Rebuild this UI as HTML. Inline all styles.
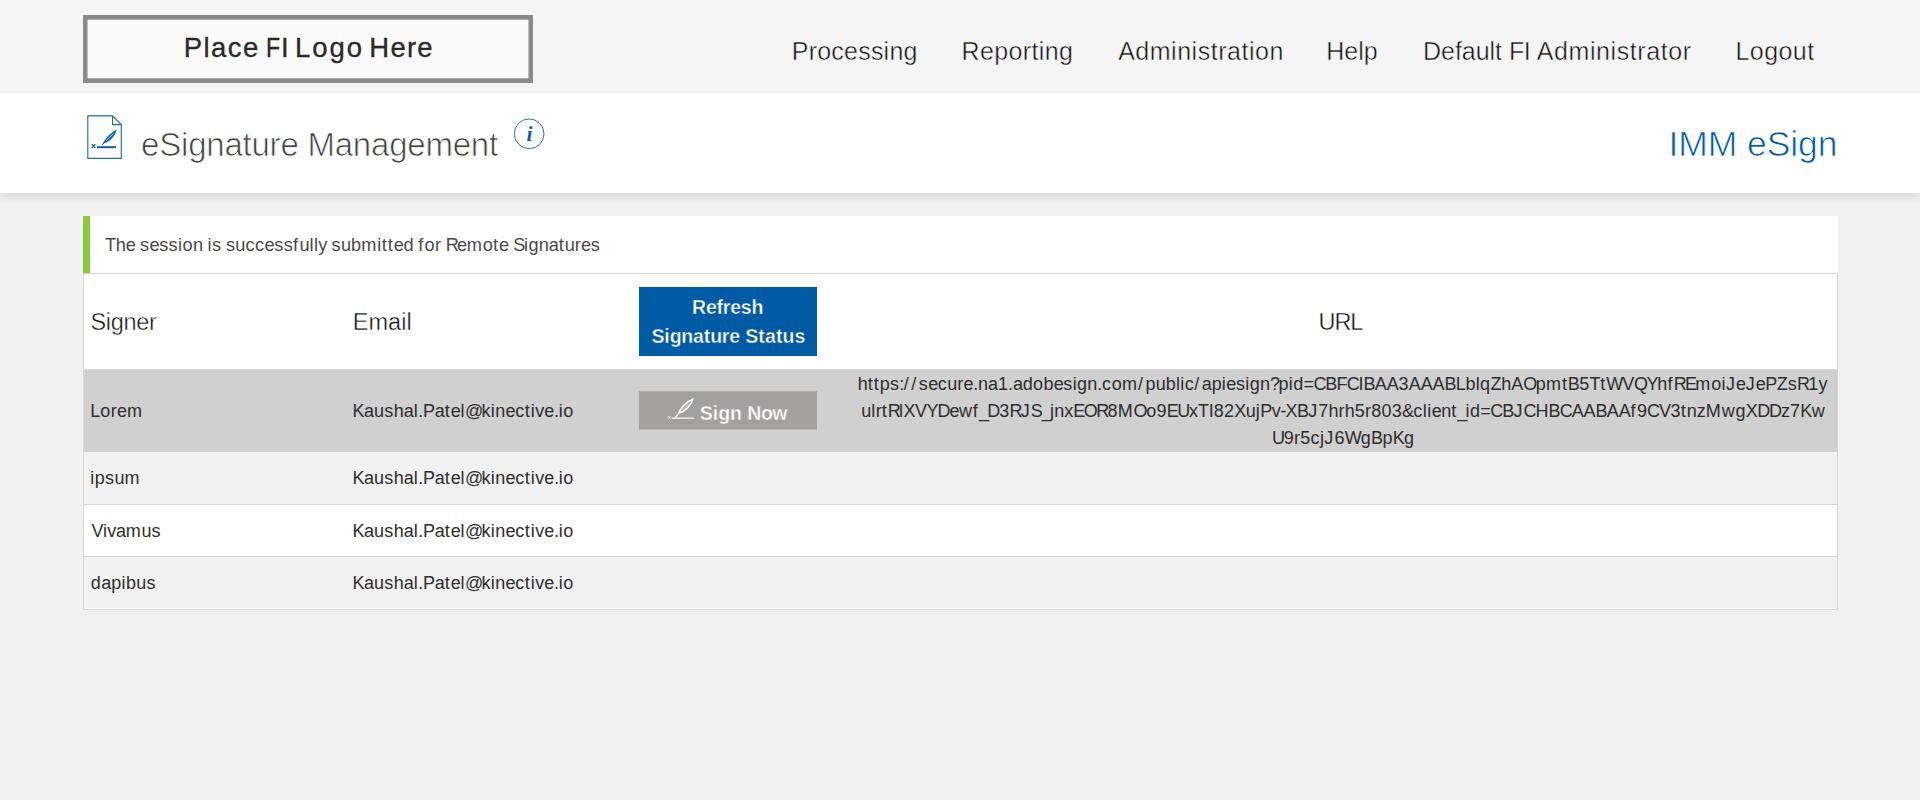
<!DOCTYPE html>
<html>
<head>
<meta charset="utf-8">
<title>eSignature Management</title>
<style>
html,body{margin:0;padding:0;}
body{width:1920px;height:800px;overflow:hidden;background:#f1f1f1;font-family:"Liberation Sans",sans-serif;position:relative;}
.abs{position:absolute;white-space:nowrap;line-height:1;}
#hdr{position:absolute;left:0;top:0;width:1920px;height:93px;background:linear-gradient(to bottom,#f5f5f5 0,#f5f5f5 89px,#f1f1f1 93px);z-index:1;}
#logo,#logotxt,.nav{z-index:2;}
#band{position:absolute;left:0;top:93px;width:1920px;height:100px;background:#fff;box-shadow:0 2px 10px rgba(0,0,0,0.14);}
.nav{color:#111;font-size:25px;top:39px;-webkit-text-stroke:0.45px #f5f5f5;}
#msg{position:absolute;left:83px;top:216px;width:1748px;height:57px;background:#fff;border-left:7px solid #8cc63f;}
#tbl{position:absolute;left:83px;top:273px;width:1753px;height:335px;border:1px solid #d6d6d6;background:#fff;}
.row{position:absolute;left:84px;width:1753px;}
.cell{color:#2e2e2e;font-size:18px;letter-spacing:0.1px;}
.th{color:#111;font-size:23.5px;-webkit-text-stroke:0.4px #fff;}
</style>
</head>
<body>
<div id="hdr"></div>
<svg id="logo" style="position:absolute;left:83px;top:15px;" width="450" height="68" viewBox="0 0 450 68"><rect x="0" y="0" width="450" height="68" fill="#8b8b8b"/><rect x="4.5" y="4.7" width="441" height="58.6" fill="#fafafa"/></svg>
<span class="abs" id="lt1" style="left:183.75px;letter-spacing:1.44px;top:34px;font-size:27.5px;color:#2a2828;-webkit-text-stroke:0.3px #2a2828;z-index:2;">Place</span>
<span class="abs" id="lt2" style="left:266.2px;transform-origin:0 0;transform:scaleX(0.84);top:34px;font-size:27.5px;color:#2a2828;-webkit-text-stroke:0.3px #2a2828;z-index:2;">F</span>
<span class="abs" id="lt2b" style="left:281.1px;top:34px;font-size:27.5px;color:#2a2828;-webkit-text-stroke:0.3px #2a2828;z-index:2;">I</span>
<span class="abs" id="lt3" style="left:294.9px;letter-spacing:1.97px;top:34px;font-size:27.5px;color:#2a2828;-webkit-text-stroke:0.3px #2a2828;z-index:2;">Logo</span>
<span class="abs" id="lt4" style="left:369.3px;letter-spacing:1.23px;top:34px;font-size:27.5px;color:#2a2828;-webkit-text-stroke:0.3px #2a2828;z-index:2;">Here</span>

<span class="abs nav" id="n1" style="left:791.75px;"><span style="letter-spacing:0.223px">Processing</span></span>
<span class="abs nav" id="n2" style="left:961.55px;"><span style="letter-spacing:0.362px">Reporting</span></span>
<span class="abs nav" id="n3" style="left:1118.15px;"><span style="letter-spacing:0.522px">Administration</span></span>
<span class="abs nav" id="n4" style="left:1326.35px;"><span style="letter-spacing:-0.029px">Help</span></span>
<span class="abs nav" id="n5" style="left:1423.05px;"><span style="letter-spacing:-0.032px">Default </span><span style="letter-spacing:-0.421px">FI </span><span style="letter-spacing:0.569px">Administrator</span></span>
<span class="abs nav" id="n6" style="left:1735.55px;"><span style="letter-spacing:0.423px">Logout</span></span>

<div id="band"></div>
<svg id="docicon" style="position:absolute;left:86px;top:114px;" width="38" height="46" viewBox="0 0 38 46">
  <path d="M1.8 1.8 H26.5 L35.3 10.6 V44.3 H1.8 Z" fill="#fff" stroke="#1b6fbb" stroke-width="1.15" stroke-linejoin="round"/>
  <path d="M26.5 1.8 V10.6 H35.3" fill="none" stroke="#1b6fbb" stroke-width="1.05"/>
  <path d="M11 33.2 H30.2" stroke="#0f5ea8" stroke-width="2" fill="none"/>
  <path d="M5.8 30.2 L9.4 34 M9.4 30.2 L5.8 34" stroke="#0f5ea8" stroke-width="1.2" fill="none"/>
  <path d="M16.6 30.4 C18.2 26 23 19.6 30.8 15.6 C29 22 24.6 27.6 18.8 29 Z" fill="#0f5ea8"/>
  <path d="M16.2 30.8 L19.4 27.4" stroke="#0f5ea8" stroke-width="1" fill="none"/>
  <path d="M20.2 26.6 L27.2 19.6" stroke="#cfe0f0" stroke-width="1" fill="none"/>
</svg>
<span class="abs" id="title" style="left:141.10px;top:128px;font-size:33px;color:#444;-webkit-text-stroke:0.7px #fff;"><span style="letter-spacing:-0.220px">eSignature Management</span></span>
<svg id="info" style="position:absolute;left:512px;top:117px;" width="34" height="34" viewBox="0 0 34 34">
  <circle cx="17.15" cy="16.8" r="14.85" fill="#fff" stroke="#1b6bb3" stroke-width="0.95"/>
  <text x="17.4" y="24" text-anchor="middle" font-family="Liberation Serif" font-style="italic" font-weight="bold" font-size="21.5" fill="#0f5ea8">i</text>
</svg>
<span class="abs" id="imm" style="left:1668.42px;top:127px;font-size:35.5px;color:#005ba4;-webkit-text-stroke:0.7px #fff;"><span style="letter-spacing:-0.077px">IMM eSign</span></span>

<div id="msg"></div>
<span class="abs" id="msgtxt" style="left:104.89px;top:236px;font-size:18.2px;color:#4a4a4a;"><span style="letter-spacing:-0.21px">T</span><span style="letter-spacing:-0.06px">h</span><span style="letter-spacing:-0.44px">e</span><span style="letter-spacing:-0.53px"> </span><span style="letter-spacing:0.32px">s</span><span style="letter-spacing:-0.44px">e</span><span style="letter-spacing:0.32px">s</span><span style="letter-spacing:0.32px">s</span><span style="letter-spacing:0.39px">i</span><span style="letter-spacing:0.30px">o</span><span style="letter-spacing:-0.04px">n</span><span style="letter-spacing:-0.53px"> </span><span style="letter-spacing:0.39px">i</span><span style="letter-spacing:0.32px">s</span><span style="letter-spacing:-0.53px"> </span><span style="letter-spacing:0.32px">s</span><span style="letter-spacing:-0.05px">u</span><span style="letter-spacing:0.47px">c</span><span style="letter-spacing:0.47px">c</span><span style="letter-spacing:-0.44px">e</span><span style="letter-spacing:0.32px">s</span><span style="letter-spacing:0.32px">s</span><span style="letter-spacing:1.29px">f</span><span style="letter-spacing:-0.05px">u</span><span style="letter-spacing:0.39px">l</span><span style="letter-spacing:0.39px">l</span><span style="letter-spacing:-0.45px">y</span><span style="letter-spacing:-0.53px"> </span><span style="letter-spacing:0.32px">s</span><span style="letter-spacing:-0.05px">u</span><span style="letter-spacing:0.13px">b</span><span style="letter-spacing:0.86px">m</span><span style="letter-spacing:0.39px">i</span><span style="letter-spacing:0.91px">t</span><span style="letter-spacing:0.91px">t</span><span style="letter-spacing:-0.44px">e</span><span style="letter-spacing:0.18px">d</span><span style="letter-spacing:-0.53px"> </span><span style="letter-spacing:1.29px">f</span><span style="letter-spacing:0.30px">o</span><span style="letter-spacing:0.12px">r</span><span style="letter-spacing:-0.53px"> </span><span style="letter-spacing:-1.89px">R</span><span style="letter-spacing:-0.44px">e</span><span style="letter-spacing:0.86px">m</span><span style="letter-spacing:0.30px">o</span><span style="letter-spacing:0.91px">t</span><span style="letter-spacing:-0.44px">e</span><span style="letter-spacing:-0.53px"> </span><span style="letter-spacing:-1.30px">S</span><span style="letter-spacing:0.39px">i</span><span style="letter-spacing:0.13px">g</span><span style="letter-spacing:-0.04px">n</span><span style="letter-spacing:-0.18px">a</span><span style="letter-spacing:0.91px">t</span><span style="letter-spacing:-0.05px">u</span><span style="letter-spacing:0.12px">r</span><span style="letter-spacing:-0.44px">e</span><span style="letter-spacing:0.32px">s</span></span>

<div id="tbl"></div>
<div class="row" style="top:369px;height:82px;background:#d0d0d0;border-top:1px solid #dadada;"></div>
<div class="row" style="top:452px;height:52px;background:#f1f1f1;border-bottom:1px solid #d6d6d6;"></div>
<div class="row" style="top:505px;height:51px;background:#fff;border-bottom:1px solid #d6d6d6;"></div>
<div class="row" style="top:557px;height:51px;background:#f1f1f1;"></div>

<span class="abs th" id="h1" style="left:90.43px;top:311px;"><span style="letter-spacing:-0.308px">Signer</span></span>
<span class="abs th" id="h2" style="left:352.67px;top:311px;"><span style="letter-spacing:0.064px">Email</span></span>
<span class="abs th" id="h3" style="left:1318.49px;top:311px;"><span style="letter-spacing:-1.074px">URL</span></span>

<div id="btn1" style="position:absolute;left:639px;top:287px;width:178px;height:69px;background:#005ba4;"></div>
<span class="abs" id="b1a" style="-webkit-text-stroke:0.35px #005ba4;left:692.10px;top:298px;font-size:19.5px;font-weight:bold;color:#fff;"><span style="letter-spacing:-0.222px">Refresh</span></span>
<span class="abs" id="b1b" style="-webkit-text-stroke:0.35px #005ba4;left:651.54px;top:327px;font-size:19.5px;font-weight:bold;color:#fff;"><span style="letter-spacing:-0.165px">Signature </span><span style="letter-spacing:0.113px">Status</span></span>

<svg id="btn2" style="position:absolute;left:638px;top:390px;" width="181" height="41" viewBox="0 0 181 41"><rect x="0.9" y="1.3" width="178.1" height="38.2" fill="#a2a1a0"/></svg>
<svg id="pen" style="position:absolute;left:667px;top:398px;" width="28" height="23" viewBox="0 0 28 23">
  <path d="M4.6 20.1 H26.8" stroke="#fff" stroke-width="1.2" fill="none"/>
  <path d="M1.1 18.2 L3.9 20.9 M3.9 18.2 L1.1 20.9" stroke="#fff" stroke-width="1" fill="none"/>
  <path d="M11.9 15 C13.2 9.6 19.4 3.8 25.9 1.2 C24.2 7.6 18 13.6 11.9 15 Z" fill="#b9b8b7" stroke="#fff" stroke-width="1.3" stroke-linejoin="miter"/>
  <path d="M7.9 20.1 L12.6 14.2" stroke="#fff" stroke-width="1.3" fill="none"/>
</svg>
<span class="abs" id="b2" style="-webkit-text-stroke:0.35px #a2a1a0;left:699.84px;top:404px;font-size:19.5px;font-weight:bold;color:#fff;"><span style="letter-spacing:-0.033px">Sign </span><span style="letter-spacing:-0.483px">Now</span></span>

<span class="abs cell" id="c1" style="left:90.22px;top:402px;"><span style="letter-spacing:-0.03px">L</span><span style="letter-spacing:0.57px">o</span><span style="letter-spacing:0.28px">r</span><span style="letter-spacing:-0.19px">e</span><span style="letter-spacing:1.26px">m</span></span>
<span class="abs cell" id="c2" style="left:90.30px;top:469px;"><span style="letter-spacing:0.43px">i</span><span style="letter-spacing:0.24px">p</span><span style="letter-spacing:0.42px">s</span><span style="letter-spacing:0.06px">u</span><span style="letter-spacing:1.02px">m</span></span>
<span class="abs cell" id="c3" style="left:91.42px;top:522px;"><span style="letter-spacing:-0.54px">V</span><span style="letter-spacing:0.37px">i</span><span style="letter-spacing:-0.27px">v</span><span style="letter-spacing:-0.21px">a</span><span style="letter-spacing:0.80px">m</span><span style="letter-spacing:-0.08px">u</span><span style="letter-spacing:0.29px">s</span></span>
<span class="abs cell" id="c4" style="left:90.74px;top:574px;"><span style="letter-spacing:0.38px">d</span><span style="letter-spacing:0.01px">a</span><span style="letter-spacing:0.32px">p</span><span style="letter-spacing:0.47px">i</span><span style="letter-spacing:0.32px">b</span><span style="letter-spacing:0.14px">u</span><span style="letter-spacing:0.50px">s</span></span>
<span class="abs cell" id="e1" style="left:352.52px;top:402px;"><span style="letter-spacing:-0.49px">K</span><span style="letter-spacing:-0.02px">a</span><span style="letter-spacing:0.12px">u</span><span style="letter-spacing:0.47px">s</span><span style="letter-spacing:0.11px">h</span><span style="letter-spacing:-0.02px">a</span><span style="letter-spacing:0.46px">l</span><span style="letter-spacing:-0.17px">.</span><span style="letter-spacing:-0.41px">P</span><span style="letter-spacing:-0.02px">a</span><span style="letter-spacing:1.00px">t</span><span style="letter-spacing:-0.28px">e</span><span style="letter-spacing:0.46px">l</span><span style="letter-spacing:-1.77px">@</span><span style="letter-spacing:0.31px">k</span><span style="letter-spacing:0.46px">i</span><span style="letter-spacing:0.13px">n</span><span style="letter-spacing:-0.28px">e</span><span style="letter-spacing:0.62px">c</span><span style="letter-spacing:1.00px">t</span><span style="letter-spacing:0.46px">i</span><span style="letter-spacing:-0.10px">v</span><span style="letter-spacing:-0.28px">e</span><span style="letter-spacing:-0.17px">.</span><span style="letter-spacing:0.46px">i</span><span style="letter-spacing:0.47px">o</span></span>
<span class="abs cell" id="e2" style="left:352.52px;top:469px;"><span style="letter-spacing:-0.49px">K</span><span style="letter-spacing:-0.02px">a</span><span style="letter-spacing:0.12px">u</span><span style="letter-spacing:0.47px">s</span><span style="letter-spacing:0.11px">h</span><span style="letter-spacing:-0.02px">a</span><span style="letter-spacing:0.46px">l</span><span style="letter-spacing:-0.17px">.</span><span style="letter-spacing:-0.41px">P</span><span style="letter-spacing:-0.02px">a</span><span style="letter-spacing:1.00px">t</span><span style="letter-spacing:-0.28px">e</span><span style="letter-spacing:0.46px">l</span><span style="letter-spacing:-1.77px">@</span><span style="letter-spacing:0.31px">k</span><span style="letter-spacing:0.46px">i</span><span style="letter-spacing:0.13px">n</span><span style="letter-spacing:-0.28px">e</span><span style="letter-spacing:0.62px">c</span><span style="letter-spacing:1.00px">t</span><span style="letter-spacing:0.46px">i</span><span style="letter-spacing:-0.10px">v</span><span style="letter-spacing:-0.28px">e</span><span style="letter-spacing:-0.17px">.</span><span style="letter-spacing:0.46px">i</span><span style="letter-spacing:0.47px">o</span></span>
<span class="abs cell" id="e3" style="left:352.52px;top:522px;"><span style="letter-spacing:-0.49px">K</span><span style="letter-spacing:-0.02px">a</span><span style="letter-spacing:0.12px">u</span><span style="letter-spacing:0.47px">s</span><span style="letter-spacing:0.11px">h</span><span style="letter-spacing:-0.02px">a</span><span style="letter-spacing:0.46px">l</span><span style="letter-spacing:-0.17px">.</span><span style="letter-spacing:-0.41px">P</span><span style="letter-spacing:-0.02px">a</span><span style="letter-spacing:1.00px">t</span><span style="letter-spacing:-0.28px">e</span><span style="letter-spacing:0.46px">l</span><span style="letter-spacing:-1.77px">@</span><span style="letter-spacing:0.31px">k</span><span style="letter-spacing:0.46px">i</span><span style="letter-spacing:0.13px">n</span><span style="letter-spacing:-0.28px">e</span><span style="letter-spacing:0.62px">c</span><span style="letter-spacing:1.00px">t</span><span style="letter-spacing:0.46px">i</span><span style="letter-spacing:-0.10px">v</span><span style="letter-spacing:-0.28px">e</span><span style="letter-spacing:-0.17px">.</span><span style="letter-spacing:0.46px">i</span><span style="letter-spacing:0.47px">o</span></span>
<span class="abs cell" id="e4" style="left:352.52px;top:574px;"><span style="letter-spacing:-0.49px">K</span><span style="letter-spacing:-0.02px">a</span><span style="letter-spacing:0.12px">u</span><span style="letter-spacing:0.47px">s</span><span style="letter-spacing:0.11px">h</span><span style="letter-spacing:-0.02px">a</span><span style="letter-spacing:0.46px">l</span><span style="letter-spacing:-0.17px">.</span><span style="letter-spacing:-0.41px">P</span><span style="letter-spacing:-0.02px">a</span><span style="letter-spacing:1.00px">t</span><span style="letter-spacing:-0.28px">e</span><span style="letter-spacing:0.46px">l</span><span style="letter-spacing:-1.77px">@</span><span style="letter-spacing:0.31px">k</span><span style="letter-spacing:0.46px">i</span><span style="letter-spacing:0.13px">n</span><span style="letter-spacing:-0.28px">e</span><span style="letter-spacing:0.62px">c</span><span style="letter-spacing:1.00px">t</span><span style="letter-spacing:0.46px">i</span><span style="letter-spacing:-0.10px">v</span><span style="letter-spacing:-0.28px">e</span><span style="letter-spacing:-0.17px">.</span><span style="letter-spacing:0.46px">i</span><span style="letter-spacing:0.47px">o</span></span>

<span class="abs cell" id="u1" style="left:857.85px;top:375px;"><span style="letter-spacing:0.00px">h</span><span style="letter-spacing:0.94px">t</span><span style="letter-spacing:0.94px">t</span><span style="letter-spacing:0.19px">p</span><span style="letter-spacing:0.38px">s</span><span style="letter-spacing:-0.60px">:</span><span style="letter-spacing:2.49px">/</span><span style="letter-spacing:2.49px">/</span><span style="letter-spacing:0.38px">s</span><span style="letter-spacing:-0.38px">e</span><span style="letter-spacing:0.52px">c</span><span style="letter-spacing:0.01px">u</span><span style="letter-spacing:0.16px">r</span><span style="letter-spacing:-0.38px">e</span><span style="letter-spacing:-0.22px">.</span><span style="letter-spacing:0.02px">n</span><span style="letter-spacing:-0.12px">a</span><span style="letter-spacing:0.20px">1</span><span style="letter-spacing:-0.22px">.</span><span style="letter-spacing:-0.12px">a</span><span style="letter-spacing:0.24px">d</span><span style="letter-spacing:0.36px">o</span><span style="letter-spacing:0.19px">b</span><span style="letter-spacing:-0.38px">e</span><span style="letter-spacing:0.38px">s</span><span style="letter-spacing:0.41px">i</span><span style="letter-spacing:0.19px">g</span><span style="letter-spacing:0.02px">n</span><span style="letter-spacing:-0.22px">.</span><span style="letter-spacing:0.52px">c</span><span style="letter-spacing:0.36px">o</span><span style="letter-spacing:0.94px">m</span><span style="letter-spacing:2.49px">/</span><span style="letter-spacing:0.19px">p</span><span style="letter-spacing:0.01px">u</span><span style="letter-spacing:0.19px">b</span><span style="letter-spacing:0.41px">l</span><span style="letter-spacing:0.41px">i</span><span style="letter-spacing:0.52px">c</span><span style="letter-spacing:2.49px">/</span><span style="letter-spacing:-0.12px">a</span><span style="letter-spacing:0.19px">p</span><span style="letter-spacing:0.41px">i</span><span style="letter-spacing:-0.38px">e</span><span style="letter-spacing:0.38px">s</span><span style="letter-spacing:0.41px">i</span><span style="letter-spacing:0.19px">g</span><span style="letter-spacing:0.02px">n</span><span style="letter-spacing:-1.43px">?</span><span style="letter-spacing:0.19px">p</span><span style="letter-spacing:0.41px">i</span><span style="letter-spacing:0.24px">d</span><span style="letter-spacing:-0.53px">=</span><span style="letter-spacing:-1.16px">C</span><span style="letter-spacing:-0.69px">B</span><span style="letter-spacing:-0.95px">F</span><span style="letter-spacing:-1.16px">C</span><span style="letter-spacing:-0.06px">I</span><span style="letter-spacing:-0.69px">B</span><span style="letter-spacing:-0.14px">A</span><span style="letter-spacing:-0.14px">A</span><span style="letter-spacing:0.20px">3</span><span style="letter-spacing:-0.14px">A</span><span style="letter-spacing:-0.14px">A</span><span style="letter-spacing:-0.14px">A</span><span style="letter-spacing:-0.69px">B</span><span style="letter-spacing:-0.23px">L</span><span style="letter-spacing:0.19px">b</span><span style="letter-spacing:0.41px">l</span><span style="letter-spacing:0.32px">q</span><span style="letter-spacing:-0.11px">Z</span><span style="letter-spacing:0.00px">h</span><span style="letter-spacing:-0.14px">A</span><span style="letter-spacing:-1.50px">O</span><span style="letter-spacing:0.19px">p</span><span style="letter-spacing:0.94px">m</span><span style="letter-spacing:0.94px">t</span><span style="letter-spacing:-0.69px">B</span><span style="letter-spacing:0.20px">5</span><span style="letter-spacing:-0.15px">T</span><span style="letter-spacing:0.94px">t</span><span style="letter-spacing:-0.86px">W</span><span style="letter-spacing:-0.44px">V</span><span style="letter-spacing:-1.50px">Q</span><span style="letter-spacing:-1.09px">Y</span><span style="letter-spacing:0.00px">h</span><span style="letter-spacing:1.31px">f</span><span style="letter-spacing:-1.80px">R</span><span style="letter-spacing:-1.67px">E</span><span style="letter-spacing:0.94px">m</span><span style="letter-spacing:0.36px">o</span><span style="letter-spacing:0.41px">i</span><span style="letter-spacing:1.03px">J</span><span style="letter-spacing:-0.38px">e</span><span style="letter-spacing:1.03px">J</span><span style="letter-spacing:-0.38px">e</span><span style="letter-spacing:-0.54px">P</span><span style="letter-spacing:-0.11px">Z</span><span style="letter-spacing:0.38px">s</span><span style="letter-spacing:-1.80px">R</span><span style="letter-spacing:0.20px">1</span><span style="letter-spacing:-0.40px">y</span></span>
<span class="abs cell" id="u2" style="left:861.23px;top:402px;"><span style="letter-spacing:0.03px">u</span><span style="letter-spacing:0.42px">l</span><span style="letter-spacing:0.17px">r</span><span style="letter-spacing:0.95px">t</span><span style="letter-spacing:-1.78px">R</span><span style="letter-spacing:0.42px">l</span><span style="letter-spacing:-0.58px">X</span><span style="letter-spacing:-0.41px">V</span><span style="letter-spacing:-1.06px">Y</span><span style="letter-spacing:-1.05px">D</span><span style="letter-spacing:-0.36px">e</span><span style="letter-spacing:0.69px">w</span><span style="letter-spacing:1.32px">f</span><span style="letter-spacing:-1.79px">_</span><span style="letter-spacing:-1.05px">D</span><span style="letter-spacing:0.22px">3</span><span style="letter-spacing:-1.78px">R</span><span style="letter-spacing:1.05px">J</span><span style="letter-spacing:-1.20px">S</span><span style="letter-spacing:-1.79px">_</span><span style="letter-spacing:0.35px">j</span><span style="letter-spacing:0.04px">n</span><span style="letter-spacing:0.03px">x</span><span style="letter-spacing:-1.65px">E</span><span style="letter-spacing:-1.48px">O</span><span style="letter-spacing:-1.78px">R</span><span style="letter-spacing:0.22px">8</span><span style="letter-spacing:0.91px">M</span><span style="letter-spacing:-1.48px">O</span><span style="letter-spacing:0.38px">o</span><span style="letter-spacing:0.22px">9</span><span style="letter-spacing:-1.65px">E</span><span style="letter-spacing:-1.19px">U</span><span style="letter-spacing:0.03px">x</span><span style="letter-spacing:-0.12px">T</span><span style="letter-spacing:-0.05px">I</span><span style="letter-spacing:0.22px">8</span><span style="letter-spacing:0.22px">2</span><span style="letter-spacing:-0.58px">X</span><span style="letter-spacing:0.03px">u</span><span style="letter-spacing:0.35px">j</span><span style="letter-spacing:-0.51px">P</span><span style="letter-spacing:-0.18px">v</span><span style="letter-spacing:-0.97px">-</span><span style="letter-spacing:-0.58px">X</span><span style="letter-spacing:-0.66px">B</span><span style="letter-spacing:1.05px">J</span><span style="letter-spacing:0.22px">7</span><span style="letter-spacing:0.02px">h</span><span style="letter-spacing:0.17px">r</span><span style="letter-spacing:0.02px">h</span><span style="letter-spacing:0.22px">5</span><span style="letter-spacing:0.17px">r</span><span style="letter-spacing:0.22px">8</span><span style="letter-spacing:0.22px">0</span><span style="letter-spacing:0.22px">3</span><span style="letter-spacing:-0.68px">&amp;</span><span style="letter-spacing:0.54px">c</span><span style="letter-spacing:0.42px">l</span><span style="letter-spacing:0.42px">i</span><span style="letter-spacing:-0.36px">e</span><span style="letter-spacing:0.04px">n</span><span style="letter-spacing:0.95px">t</span><span style="letter-spacing:-1.79px">_</span><span style="letter-spacing:0.42px">i</span><span style="letter-spacing:0.26px">d</span><span style="letter-spacing:-0.51px">=</span><span style="letter-spacing:-1.14px">C</span><span style="letter-spacing:-0.66px">B</span><span style="letter-spacing:1.05px">J</span><span style="letter-spacing:-1.14px">C</span><span style="letter-spacing:-0.01px">H</span><span style="letter-spacing:-0.66px">B</span><span style="letter-spacing:-1.14px">C</span><span style="letter-spacing:-0.12px">A</span><span style="letter-spacing:-0.12px">A</span><span style="letter-spacing:-0.66px">B</span><span style="letter-spacing:-0.12px">A</span><span style="letter-spacing:-0.12px">A</span><span style="letter-spacing:1.32px">f</span><span style="letter-spacing:0.22px">9</span><span style="letter-spacing:-1.14px">C</span><span style="letter-spacing:-0.41px">V</span><span style="letter-spacing:0.22px">3</span><span style="letter-spacing:0.95px">t</span><span style="letter-spacing:0.04px">n</span><span style="letter-spacing:0.03px">z</span><span style="letter-spacing:0.91px">M</span><span style="letter-spacing:0.69px">w</span><span style="letter-spacing:0.21px">g</span><span style="letter-spacing:-0.58px">X</span><span style="letter-spacing:-1.05px">D</span><span style="letter-spacing:-1.05px">D</span><span style="letter-spacing:0.03px">z</span><span style="letter-spacing:0.22px">7</span><span style="letter-spacing:-0.58px">K</span><span style="letter-spacing:0.69px">w</span></span>
<span class="abs cell" id="u3" style="left:1272.01px;top:429px;"><span style="letter-spacing:-1.19px">U</span><span style="letter-spacing:0.22px">9</span><span style="letter-spacing:0.17px">r</span><span style="letter-spacing:0.22px">5</span><span style="letter-spacing:0.53px">c</span><span style="letter-spacing:0.35px">j</span><span style="letter-spacing:1.05px">J</span><span style="letter-spacing:0.22px">6</span><span style="letter-spacing:-0.83px">W</span><span style="letter-spacing:0.21px">g</span><span style="letter-spacing:-0.67px">B</span><span style="letter-spacing:0.21px">p</span><span style="letter-spacing:-0.59px">K</span><span style="letter-spacing:0.21px">g</span></span>
</body>
</html>
